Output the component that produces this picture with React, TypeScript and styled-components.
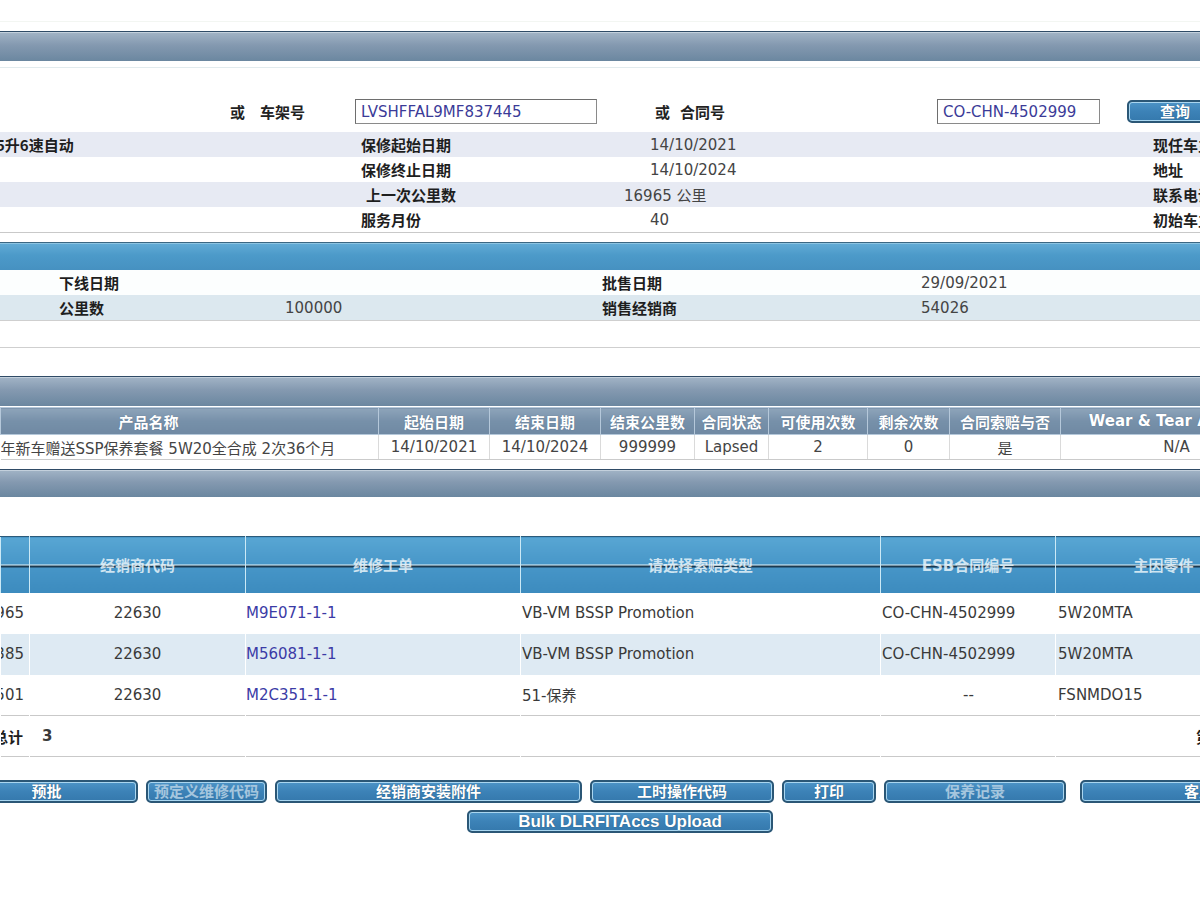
import React from 'react';
import styled, { createGlobalStyle } from 'styled-components';

const GlobalStyle = createGlobalStyle`
  *, *::before, *::after { box-sizing: border-box; }
  html, body { margin: 0; padding: 0; background: #fff; }
  body {
    font-family: "DejaVu Sans", "Noto Sans CJK SC", sans-serif;
    font-size: 15px;
    color: #3a3a3a;
  }
`;

const Frame = styled.div`
  width: 1200px;
  height: 900px;
  overflow: hidden;
  background: #fff;
  display: flex;
  flex-direction: column;
`;

const TopSpace = styled.div`
  flex-shrink: 0;
  height: 31px;
  background: linear-gradient(#fff 21px, #f3f6f2 21px, #f3f6f2 22px, #fff 22px);
`;

const SectionBar = styled.div<{ $tone: 'slate' | 'blue'; $h: number; $mt?: number }>`
  flex-shrink: 0;
  height: ${(p) => p.$h}px;
  margin-top: ${(p) => p.$mt ?? 0}px;
  border-top: 1px solid ${(p) => (p.$tone === 'blue' ? '#3b6783' : '#2f4b66')};
  box-shadow: inset 0 1px 0 ${(p) => (p.$tone === 'blue' ? '#8cc4e2' : '#c3d0dc')};
  background: ${(p) =>
    p.$tone === 'blue'
      ? 'linear-gradient(#63acd6, #4c9ac9 45%, #4691c1)'
      : 'linear-gradient(#a2b4c6, #8499b0 45%, #6b87a0)'};
`;

const Rule = styled.div<{ $mt: number }>`
  flex-shrink: 0;
  height: 1px;
  margin-top: ${(p) => p.$mt}px;
  background: #e2ebee;
`;

/* ---------- search row ---------- */
const SearchRow = styled.div`
  flex-shrink: 0;
  margin-top: 30px;
  height: 27px;
  display: flex;
  align-items: center;
  padding-left: 230px;
  white-space: nowrap;
`;

const OrWord = styled.span<{ $ml?: number; $gap: number }>`
  flex-shrink: 0;
  width: 15px;
  margin-left: ${(p) => p.$ml ?? 0}px;
  margin-right: ${(p) => p.$gap}px;
  font-family: "Noto Sans CJK SC", sans-serif;
  font-weight: 700;
  color: #222;
`;

const FieldLabel = styled.span<{ $w: number }>`
  width: ${(p) => p.$w}px;
  flex-shrink: 0;
  font-family: "Noto Sans CJK SC", sans-serif;
  font-weight: 700;
  color: #222;
`;

const TextInput = styled.input<{ $w: number }>`
  flex-shrink: 0;
  width: ${(p) => p.$w}px;
  height: 25px;
  padding: 0 5px;
  border: 1px solid #8a8a8a;
  border-top-color: #6e6e6e;
  border-left-color: #6e6e6e;
  font-family: "DejaVu Sans", sans-serif;
  font-size: 15px;
  color: #3b3b98;
  background: #fff;
  outline: none;
`;

const Btn = styled.button<{ $w: number; $off?: boolean; $ml?: number; $latin?: boolean }>`
  flex-shrink: 0;
  width: ${(p) => p.$w}px;
  height: 23px;
  margin-left: ${(p) => p.$ml ?? 0}px;
  padding: 0;
  border: 2px solid #2b5776;
  border-radius: 5px;
  box-shadow: inset 0 0 0 1px #a9d6f0;
  background: linear-gradient(#4d94c7, #3c82b7 50%, #3579ad);
  color: ${(p) => (p.$off ? '#a5c6de' : '#ffffff')};
  font-family: "Liberation Sans", "Noto Sans CJK SC", sans-serif;
  font-weight: 700;
  font-size: ${(p) => (p.$latin ? 17 : 15)}px;
  line-height: 17px;
  white-space: nowrap;
  overflow: hidden;
  text-shadow: ${(p) => (p.$off ? 'none' : '0 0 1px #1d4766')};
`;

/* ---------- info block ---------- */
const InfoBlock = styled.div`
  flex-shrink: 0;
  margin-top: 7px;
  border-bottom: 1px solid #c9c9c9;
`;

const InfoRow = styled.div<{ $shade?: boolean }>`
  display: grid;
  grid-template-columns: 361px 289px 503px 1fr;
  height: 25px;
  align-items: center;
  background: ${(p) => (p.$shade ? '#e7eaf3' : '#fff')};
`;

const DealerRow = styled.div<{ $shade?: boolean }>`
  display: grid;
  grid-template-columns: 59px 226px 317px 319px 1fr;
  height: 25px;
  align-items: center;
  background: ${(p) => (p.$shade ? '#dce8ef' : '#fcfefe')};
`;

const Cell = styled.span<{ $bold?: boolean; $shift?: number }>`
  white-space: nowrap;
  margin-left: ${(p) => p.$shift ?? 0}px;
  font-family: ${(p) => (p.$bold ? '"Noto Sans CJK SC", sans-serif' : '"DejaVu Sans", "Noto Sans CJK SC", sans-serif')};
  font-weight: ${(p) => (p.$bold ? 700 : 400)};
  color: ${(p) => (p.$bold ? '#1e1e1e' : '#444')};
`;

const DealerBlock = styled.div`
  flex-shrink: 0;
  border-bottom: 1px solid #cfcfcf;
`;

const EmptyBand = styled.div`
  flex-shrink: 0;
  height: 27px;
  border-bottom: 1px solid #cfcfcf;
`;

/* ---------- contract table ---------- */
const Table = styled.table<{ $w: number; $mt: number }>`
  flex-shrink: 0;
  table-layout: fixed;
  border-collapse: collapse;
  width: ${(p) => p.$w}px;
  margin-top: ${(p) => p.$mt}px;
`;

const ContractTh = styled.th<{ $pr?: number }>`
  height: 27px;
  padding: 0 ${(p) => p.$pr ?? 0}px 0 0;
  border: 1px solid #b5c8da;
  background: linear-gradient(#8ea4ba, #7690a9 50%, #7089a3);
  color: #fff;
  font-family: "DejaVu Sans", "Noto Sans CJK SC", sans-serif;
  font-weight: 700;
  font-size: 15px;
  text-align: center;
  white-space: nowrap;
  overflow: hidden;
  text-shadow: 0 0 1px #4f6882;
`;

const ContractTd = styled.td<{ $left?: boolean }>`
  height: 25px;
  padding: 0;
  border-right: 1px solid #dadada;
  border-bottom: 1px solid #cbcbcb;
  text-align: ${(p) => (p.$left ? 'left' : 'center')};
  white-space: nowrap;
  overflow: hidden;
  color: #444;
`;

/* ---------- repair table ---------- */
const RepairTh = styled.th`
  height: 56px;
  padding: 0;
  border-top: 1px solid #2b5a7a;
  border-left: 1px solid #cbe9f6;
  border-right: 1px solid #cbe9f6;
  background:
    linear-gradient(
      to bottom,
      transparent 27px,
      #e2f3fa 27px,
      #e2f3fa 28px,
      #1a3950 28px,
      #1a3950 30px,
      transparent 30px
    ),
    linear-gradient(#58a6d3, #4796c8 50%, #3c8bbe);
  color: rgba(232, 244, 250, 0.85);
  font-family: "DejaVu Sans", "Noto Sans CJK SC", sans-serif;
  font-weight: 700;
  font-size: 15px;
  text-align: center;
  white-space: nowrap;
  overflow: hidden;
`;

const RepairTr = styled.tr<{ $shade?: boolean; $end?: boolean }>`
  background: ${(p) => (p.$shade ? '#deeaf3' : '#fff')};
  border-bottom: ${(p) => (p.$end ? '1px solid #c9c9c9' : '0')};
`;

const RepairTd = styled.td<{ $align?: 'left' | 'center' | 'right'; $pl?: number; $bold?: boolean }>`
  height: 41px;
  padding: 0 0 0 ${(p) => p.$pl ?? 0}px;
  border-right: 1px solid rgba(255, 255, 255, 0.9);
  text-align: ${(p) => p.$align ?? 'left'};
  white-space: nowrap;
  overflow: hidden;
  color: #3a3a3a;
  font-weight: ${(p) => (p.$bold ? 700 : 400)};
`;

const CutRight = styled.div<{ $pr: number; $bold?: boolean }>`
  display: flex;
  justify-content: flex-end;
  overflow: hidden;
  white-space: nowrap;
  padding-right: ${(p) => p.$pr}px;
  font-family: ${(p) => (p.$bold ? '"Noto Sans CJK SC", sans-serif' : 'inherit')};
  font-weight: ${(p) => (p.$bold ? 700 : 400)};
  color: ${(p) => (p.$bold ? '#1e1e1e' : 'inherit')};
`;

const OrderLink = styled.a`
  color: #3b3ba6;
  text-decoration: none;
`;

const BoldText = styled.span`
  font-family: "Noto Sans CJK SC", "DejaVu Sans", sans-serif;
  font-weight: 700;
  color: #1e1e1e;
`;

/* ---------- buttons ---------- */
const ButtonRow = styled.div<{ $mt: number; $pl: number }>`
  flex-shrink: 0;
  display: flex;
  gap: 8px;
  margin-top: ${(p) => p.$mt}px;
  padding-left: ${(p) => p.$pl}px;
`;

const ButtonTrack = styled.div`
  display: flex;
  gap: 8px;
  margin-left: -45px;
`;

const infoRows: [string, string, string, string, number, number][] = [
  ['5升6速自动', '保修起始日期', '14/10/2021', '现任车主', 0, 0],
  ['', '保修终止日期', '14/10/2024', '地址', 0, 0],
  ['', '上一次公里数', '16965 公里', '联系电话', 5, -26],
  ['', '服务月份', '40', '初始车主', 0, 0],
];

const contractCols = [378, 111, 111, 94, 74, 99, 82, 111, 232];
const contractHeads = ['产品名称', '起始日期', '结束日期', '结束公里数', '合同状态', '可使用次数', '剩余次数', '合同索赔与否', 'Wear & Tear Allowed'];
const contractData = ['年新车赠送SSP保养套餐 5W20全合成 2次36个月', '14/10/2021', '14/10/2024', '999999', 'Lapsed', '2', '0', '是', 'N/A'];

const repairCols = [29, 216, 275, 360, 175, 216];
const repairHeads = ['', '经销商代码', '维修工单', '请选择索赔类型', 'ESB合同编号', '主因零件'];
const repairRows = [
  { km: '16965', dealer: '22630', order: 'M9E071-1-1', type: 'VB-VM BSSP Promotion', esb: 'CO-CHN-4502999', part: '5W20MTA' },
  { km: '14385', dealer: '22630', order: 'M56081-1-1', type: 'VB-VM BSSP Promotion', esb: 'CO-CHN-4502999', part: '5W20MTA' },
  { km: '8501', dealer: '22630', order: 'M2C351-1-1', type: '51-保养', esb: '--', part: 'FSNMDO15' },
];

export default function App() {
  return (
    <>
      <GlobalStyle />
      <Frame>
        <TopSpace />
        <SectionBar $tone="slate" $h={30} />
        <Rule $mt={6} />

        <SearchRow>
          <OrWord $gap={15}>或</OrWord>
          <FieldLabel $w={95}>车架号</FieldLabel>
          <TextInput $w={242} readOnly value="LVSHFFAL9MF837445" />
          <OrWord $ml={58} $gap={10}>或</OrWord>
          <FieldLabel $w={257}>合同号</FieldLabel>
          <TextInput $w={163} readOnly value="CO-CHN-4502999" />
          <Btn $w={96} $ml={27}>查询</Btn>
        </SearchRow>

        <InfoBlock>
          {infoRows.map(([a, label, value, right, ls, vs], i) => (
            <InfoRow key={i} $shade={i % 2 === 0}>
              <Cell $bold $shift={-4}>{a}</Cell>
              <Cell $bold $shift={ls}>{label}</Cell>
              <Cell $shift={vs}>{value}</Cell>
              <Cell $bold>{right}</Cell>
            </InfoRow>
          ))}
        </InfoBlock>

        <SectionBar $tone="blue" $h={28} $mt={9} />
        <DealerBlock>
          <DealerRow>
            <span />
            <Cell $bold>下线日期</Cell>
            <span />
            <Cell $bold>批售日期</Cell>
            <Cell>29/09/2021</Cell>
          </DealerRow>
          <DealerRow $shade>
            <span />
            <Cell $bold>公里数</Cell>
            <Cell>100000</Cell>
            <Cell $bold>销售经销商</Cell>
            <Cell>54026</Cell>
          </DealerRow>
        </DealerBlock>
        <EmptyBand />

        <SectionBar $tone="slate" $h={30} $mt={28} />
        <Table $w={1292} $mt={1}>
          <colgroup>
            {contractCols.map((w, i) => (
              <col key={i} style={{ width: w }} />
            ))}
          </colgroup>
          <thead>
            <tr>
              {contractHeads.map((h, i) => (
                <ContractTh key={i} $pr={i === 0 ? 82 : 0}>{h}</ContractTh>
              ))}
            </tr>
          </thead>
          <tbody>
            <tr>
              {contractData.map((d, i) => (
                <ContractTd key={i} $left={i === 0}>{d}</ContractTd>
              ))}
            </tr>
          </tbody>
        </Table>

        <SectionBar $tone="slate" $h={28} $mt={9} />

        <Table $w={1271} $mt={39}>
          <colgroup>
            {repairCols.map((w, i) => (
              <col key={i} style={{ width: w }} />
            ))}
          </colgroup>
          <thead>
            <tr>
              {repairHeads.map((h, i) => (
                <RepairTh key={i}>{h}</RepairTh>
              ))}
            </tr>
          </thead>
          <tbody>
            {repairRows.map((r, i) => (
              <RepairTr key={i} $shade={i === 1} $end={i === repairRows.length - 1}>
                <RepairTd>
                  <CutRight $pr={5}>{r.km}</CutRight>
                </RepairTd>
                <RepairTd $align="center">{r.dealer}</RepairTd>
                <RepairTd>
                  <OrderLink href="#">{r.order}</OrderLink>
                </RepairTd>
                <RepairTd $pl={1}>{r.type}</RepairTd>
                <RepairTd $align={r.esb === '--' ? 'center' : 'left'} $pl={1}>{r.esb}</RepairTd>
                <RepairTd $pl={2}>{r.part}</RepairTd>
              </RepairTr>
            ))}
            <RepairTr $end>
              <RepairTd>
                <CutRight $pr={6} $bold>总计</CutRight>
              </RepairTd>
              <RepairTd $pl={12} $bold>3</RepairTd>
              <RepairTd />
              <RepairTd />
              <RepairTd />
              <RepairTd $pl={140}>
                <BoldText>第1页</BoldText>
              </RepairTd>
            </RepairTr>
          </tbody>
        </Table>

        <ButtonRow $mt={23} $pl={0}>
          <ButtonTrack>
            <Btn $w={183}>预批</Btn>
            <Btn $w={121} $off>预定义维修代码</Btn>
            <Btn $w={307}>经销商安装附件</Btn>
            <Btn $w={184}>工时操作代码</Btn>
            <Btn $w={94}>打印</Btn>
            <Btn $w={182} $off>保养记录</Btn>
            <Btn $w={268} $ml={6}>客户信息</Btn>
          </ButtonTrack>
        </ButtonRow>
        <ButtonRow $mt={7} $pl={467}>
          <Btn $w={306} $latin>Bulk DLRFITAccs Upload</Btn>
        </ButtonRow>
      </Frame>
    </>
  );
}
